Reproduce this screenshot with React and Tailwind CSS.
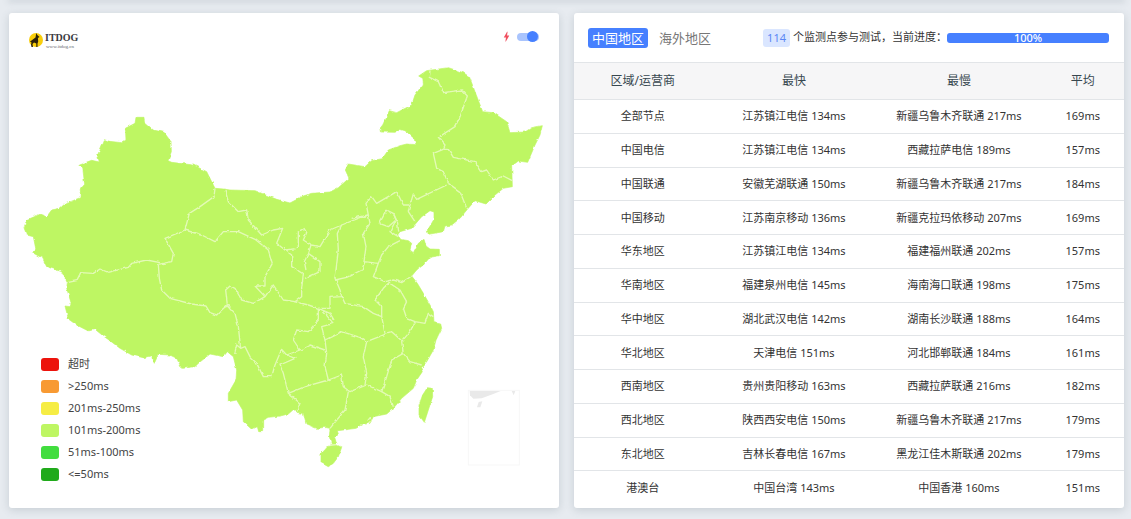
import React, { useState } from "react";
import { MdBolt } from "react-icons/md";

const legend = [
  { label: "超时", color: "bg-[#ec130c]" },
  { label: ">250ms", color: "bg-[#f89a33]" },
  { label: "201ms-250ms", color: "bg-[#f6ed44]" },
  { label: "101ms-200ms", color: "bg-[#bef663]" },
  { label: "51ms-100ms", color: "bg-[#42dd3f]" },
  { label: "<=50ms", color: "bg-[#20aa1b]" },
];

const rows = [
  ["全部节点", "江苏镇江电信 134ms", "新疆乌鲁木齐联通 217ms", "169ms"],
  ["中国电信", "江苏镇江电信 134ms", "西藏拉萨电信 189ms", "157ms"],
  ["中国联通", "安徽芜湖联通 150ms", "新疆乌鲁木齐联通 217ms", "184ms"],
  ["中国移动", "江苏南京移动 136ms", "新疆克拉玛依移动 207ms", "169ms"],
  ["华东地区", "江苏镇江电信 134ms", "福建福州联通 202ms", "157ms"],
  ["华南地区", "福建泉州电信 145ms", "海南海口联通 198ms", "175ms"],
  ["华中地区", "湖北武汉电信 142ms", "湖南长沙联通 188ms", "164ms"],
  ["华北地区", "天津电信 151ms", "河北邯郸联通 184ms", "161ms"],
  ["西南地区", "贵州贵阳移动 163ms", "西藏拉萨联通 216ms", "182ms"],
  ["西北地区", "陕西西安电信 150ms", "新疆乌鲁木齐联通 217ms", "179ms"],
  ["东北地区", "吉林长春电信 167ms", "黑龙江佳木斯联通 202ms", "179ms"],
  ["港澳台", "中国台湾 143ms", "中国香港 160ms", "151ms"],
];

const mainland =
  "72,683 80,660 120,643 140,650 155,630 180,625 195,612 240,593 241,568 254,553 248,503 236,495 275,481 298,486 293,468 313,419 328,424 365,428 378,420 376,385 405,370 408,352 432,352 433,366 460,390 492,397 513,425 514,455 504,482 515,487 580,495 620,515 645,565 670,567 690,570 765,572 790,582 830,598 870,609 910,588 935,580 990,576 1015,563 1047,535 1036,510 1045,492 1095,500 1115,482 1147,476 1165,450 1200,437 1220,432 1248,434 1242,415 1215,392 1200,388 1185,397 1142,396 1140,385 1148,375 1168,332 1190,338 1235,315 1245,285 1270,252 1268,235 1256,228 1280,212 1345,203 1390,218 1408,230 1425,275 1448,335 1480,338 1520,365 1530,398 1575,396 1595,383 1627,377 1620,405 1605,435 1583,487 1555,483 1535,498 1537,560 1510,565 1485,585 1458,612 1425,602 1402,628 1380,655 1355,675 1335,678 1330,695 1285,703 1282,692 1302,658 1302,636 1290,632 1265,650 1235,685 1200,695 1193,705 1202,718 1225,722 1235,730 1230,750 1240,758 1255,730 1272,718 1278,738 1290,747 1318,748 1318,767 1290,772 1270,795 1250,810 1235,828 1252,850 1270,880 1290,915 1300,935 1302,968 1322,972 1325,985 1308,1020 1300,1050 1280,1085 1263,1105 1267,1115 1250,1140 1240,1165 1205,1195 1180,1225 1160,1242 1120,1250 1110,1270 1090,1273 1068,1285 1030,1290 1012,1292 1015,1302 1005,1315 1010,1333 995,1335 988,1310 990,1285 975,1282 950,1285 918,1272 910,1240 888,1237 882,1227 865,1242 840,1248 805,1252 788,1260 788,1295 776,1295 772,1280 755,1288 730,1265 728,1230 710,1200 685,1205 685,1180 708,1140 710,1110 700,1070 682,1055 670,1070 630,1062 595,1090 585,1100 545,1105 530,1075 510,1065 475,1063 463,1090 458,1067 430,1073 395,1065 360,1045 330,1022 310,1008 285,988 265,993 230,975 205,957 195,918 210,920 213,908 200,865 202,848 185,815 140,800 128,775 98,758 108,750 100,710 80,705";

const hainan =
  "980,1340 1010,1335 1025,1342 1015,1370 1000,1390 985,1400 963,1388 963,1360";

const taiwan =
  "1282,1163 1297,1165 1298,1190 1285,1230 1273,1267 1257,1245 1257,1215 1268,1185";

// province borders
const borders = [
  "645,565 642,590 600,620 568,640 555,690 495,715 520,760 515,785 475,793",
  "202,848 230,842 242,818 280,820 300,807 325,817 385,802 395,790 440,780 480,788",
  "475,793 478,835 485,870 510,895 575,912 618,918 630,938 650,945 665,930 682,915",
  "682,915 705,940 715,980 722,1045 710,1035 704,1060",
  "722,1045 735,1040 750,1070 770,1090 790,1130 815,1130 825,1095 845,1048 860,1065 900,1050",
  "555,690 605,705 645,725 670,695 715,695 765,718 805,750 817,790 795,830 795,858 765,858 795,890 760,910 725,900 705,865 690,858 677,870 682,915",
  "675,570 685,605 715,635 740,630 745,660 785,705 820,690 848,685 830,730 855,750 895,745 895,695 912,685 920,698 910,720 933,735 960,740 990,690 1025,675 1075,655 1105,645",
  "933,735 925,760 960,785 960,815 915,835",
  "925,760 913,785 918,810",
  "855,750 875,765 875,800 910,822 905,865 905,890 885,905",
  "795,890 820,855 850,900 885,905 925,915 955,925 990,940 1002,960",
  "1025,675 1012,700 1015,750 1005,835 1020,870 1025,890 990,892 990,925 955,925",
  "1005,840 1040,832 1085,810 1095,785",
  "1105,645 1110,670 1090,700 1098,740 1092,785 1135,790 1145,765 1165,740 1200,722",
  "1135,790 1120,830 1155,845 1180,840 1205,848 1235,828",
  "1170,845 1150,865 1125,900 1145,920 1145,950",
  "1025,890 1035,910 1090,920 1120,940 1145,950 1155,1000 1175,995 1205,1022",
  "1170,850 1200,870 1220,905 1210,925 1220,955 1245,965 1275,970 1285,940 1300,950",
  "1245,965 1230,995 1205,1025 1210,1060 1230,1085 1265,1095",
  "1155,1003 1100,1025 1080,1012 1025,995 975,1020 965,980 1000,970 970,935",
  "1100,1025 1090,1070 1100,1120 1095,1155",
  "1210,1060 1175,1080 1160,1130 1145,1175 1100,1155 1050,1175 1030,1160 1025,1125 985,1140",
  "1145,1175 1170,1190 1180,1220",
  "1045,1175 1035,1230 990,1285",
  "975,1020 980,1060 975,1100 985,1140 915,1160 865,1180 850,1120 840,1095 885,1075 860,1065",
  "865,1180 900,1210 890,1235",
  "900,1050 930,1035 975,1050",
  "900,1050 880,1020 890,990 925,995 955,960 955,925",
  "1160,630 1180,640 1188,660 1165,680 1138,670 1160,630",
  "1188,660 1170,695 1195,710",
  "1180,640 1192,665 1196,695",
  "1055,655 1105,645 1098,610 1115,590 1130,610 1190,575 1210,615 1230,615 1240,582 1250,598 1340,555",
  "1230,615 1225,635 1245,665",
  "1345,550 1380,575 1400,625",
  "1345,550 1330,515 1310,505 1300,460 1330,448",
  "1330,448 1345,448 1360,472 1425,485 1445,515 1460,510 1480,540 1510,528 1537,542",
  "1290,212 1288,232 1315,245 1330,278 1385,270 1402,288 1380,350 1365,380 1315,412 1335,435 1330,448",
  "1100,1262 1108,1252 1114,1262 1104,1270",
  "990,1335 1012,1334",
];

function Logo() {
  return (
    <svg width="54" height="20" viewBox="1 0 54 20" role="img" aria-label="ITDOG">
      <circle cx="8" cy="11" r="7" fill="#f9ce0b" />
      <path
        d="M2 12.500L3.500 11.500L5.500 10L7.500 8.500L8.300 4L9.300 6L11.500 8L9.900 9L10.200 12.500L9.500 14.500V18H8.300V14.500L6 13.500L4.500 15L5 18H3.500L3 15.500L3.500 13.500Z"
        fill="#2b2108"
      />
      <g fontFamily="Liberation Serif, serif">
        <text x="17" y="12" fontSize="10" fontWeight="bold" fill="#3a3a40">
          ITDOG
        </text>
        <text x="18" y="19" fontSize="5" fill="#66666c">
          www.itdog.cn
        </text>
      </g>
    </svg>
  );
}

function ChinaMap() {
  return (
    <svg className="block w-full" viewBox="27 180 1650 1344" aria-hidden="true">
      <filter id="coast" x="-5%" y="-5%" width="110%" height="110%">
        <feTurbulence type="fractalNoise" baseFrequency="0.06" numOctaves="2" seed="4" />
        <feDisplacementMap
          in="SourceGraphic"
          scale="9"
          xChannelSelector="R"
          yChannelSelector="G"
        />
      </filter>
      <g filter="url(#coast)">
        <g fill="#bef663" stroke="#bef663" strokeWidth="2" strokeLinejoin="round">
          <polygon points={mainland} />
          <polygon points={hainan} />
          <polygon points={taiwan} />
        </g>
        <g fill="none" stroke="#e3fab6" strokeWidth="4" strokeLinejoin="round">
          {borders.map((points, index) => (
            <polyline key={index} points={points} />
          ))}
        </g>
      </g>
      <g fill="#e9e9e9">
        <rect x="1405" y="1171" width="153" height="224" fill="none" stroke="#f7f7f7" strokeWidth="3" />
        <path d="M1409 1173H1502L1480 1182L1445 1195L1420 1196L1410 1186Z" />
        <path d="M1436 1206L1447 1204L1441 1222L1431 1222Z" />
        <path d="M1535 1173H1546L1541 1186Z" />
      </g>
    </svg>
  );
}

function MapCard() {
  const [fast, setFast] = useState(true);

  return (
    <section className="relative rounded-[3px] bg-white shadow-[0_2px_8px_rgba(69,90,100,0.2)]">
      <header className="flex h-[47px] items-center justify-between px-5 pt-1">
        <Logo />
        <label className="flex items-center gap-1 pb-1">
          <MdBolt className="text-[#f05060]" size="13px" aria-label="快速模式" />
          <span className="relative flex items-center">
            <input
              type="checkbox"
              role="switch"
              checked={fast}
              onChange={() => setFast(!fast)}
              className="peer h-2 w-[22px] appearance-none rounded-full bg-gray-300 checked:bg-[#a9c4fd]"
            />
            <span className="pointer-events-none absolute left-0 h-[11px] w-[11px] rounded-full bg-gray-500 peer-checked:left-[10px] peer-checked:bg-[#4680ff]"></span>
          </span>
        </label>
      </header>

      <ChinaMap />

      <ul className="absolute bottom-[19px] left-8 flex flex-col text-[11px] leading-[14px] text-[#444]">
        {legend.map(({ label, color }) => (
          <li key={label} className="flex items-center gap-[9px] pb-2">
            <span className={`h-[13px] w-[18px] rounded-[3px] ${color}`}></span>
            <span>{label}</span>
          </li>
        ))}
      </ul>
    </section>
  );
}

function ResultCard() {
  const [tab, setTab] = useState("cn");

  const tabStyle = (name) =>
    tab === name
      ? "h-5 rounded-[3px] bg-[#4680ff] px-1 text-[13px] leading-[18px] text-white"
      : "h-5 rounded-[3px] px-1 text-[13px] leading-[18px] text-[#777]";

  return (
    <section className="flex flex-col rounded-[3px] bg-white pb-1 shadow-[0_2px_8px_rgba(69,90,100,0.2)]">
      <header className="flex h-[49px] items-center justify-between pl-[14px] pr-[15px]">
        <div className="flex gap-[7px]">
          <button className={tabStyle("cn")} onClick={() => setTab("cn")}>
            中国地区
          </button>
          <button className={tabStyle("oversea")} onClick={() => setTab("oversea")}>
            海外地区
          </button>
        </div>
        <div className="flex items-center text-[11px] text-[#333]">
          <span className="mr-[3px] rounded-[3px] bg-[#dae6ff] px-1 leading-[18px] text-[#5b86f5]">
            114
          </span>
          <span className="whitespace-nowrap">个监测点参与测试，当前进度：</span>
          <div
            role="progressbar"
            aria-label="当前进度"
            aria-valuenow={100}
            className="w-[162px] rounded-[3px] bg-[#4680ff] text-center font-medium leading-[10px] text-white"
          >
            100%
          </div>
        </div>
      </header>

      <table className="w-full flex-1 table-fixed border-collapse text-center text-[11px] leading-4 text-[#333]">
        <thead>
          <tr className="h-[37px] border-y border-[#e2e5e8] bg-[#f6f6f7] text-[12px] text-[#37474f]">
            <th className="w-[25%] font-normal">区域/运营商</th>
            <th className="w-[30%] font-normal">最快</th>
            <th className="w-[30%] font-normal">最慢</th>
            <th className="w-[15%] font-normal">平均</th>
          </tr>
        </thead>
        <tbody>
          {rows.map((row) => (
            <tr key={row[0]} className="border-b border-[#e2e5e8] last:border-0">
              {row.map((cell, index) => (
                <td key={index} className="py-2">
                  {cell}
                </td>
              ))}
            </tr>
          ))}
        </tbody>
      </table>
    </section>
  );
}

export default function App() {
  return (
    <div className="flex min-h-screen flex-col gap-[13px] bg-[#e7ebf0] pb-[11px] pl-[9px] pr-[7px] font-['Noto_Sans','Noto_Sans_CJK_SC',sans-serif]">
      <div className="h-0 shadow-[0_0_6px_1px_rgba(69,90,100,0.35)]"></div>
      <main className="grid grid-cols-2 gap-[15px]">
        <MapCard />
        <ResultCard />
      </main>
    </div>
  );
}
